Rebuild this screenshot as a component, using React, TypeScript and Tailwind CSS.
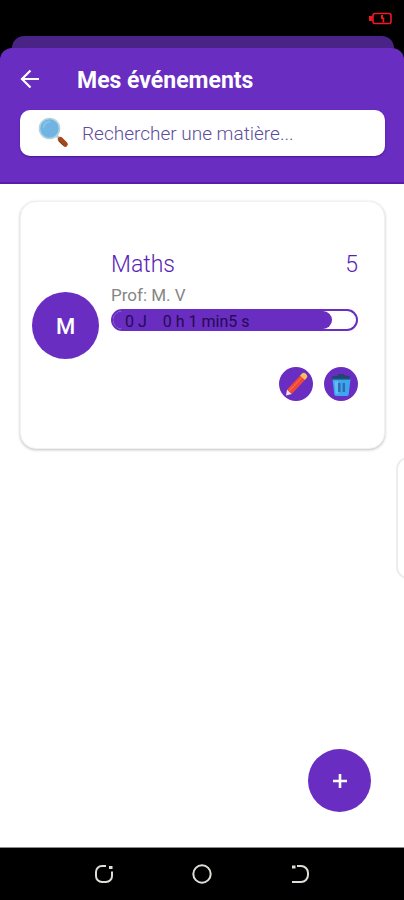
function BatteryIcon() {
  return (
    <svg width="24" height="13" viewBox="0 0 24 13" fill="none" aria-hidden="true">
      <rect x="5" y="1.500" width="18" height="10" rx="2" stroke="#ee1a1f" strokeWidth="1.600" />
      <path d="M1 4h3.500v5H1z" fill="#ee1a1f" />
      <path d="M13 3v4h1.500v3.500h1.800V5.500h-1.300V3z" fill="#ee1a1f" />
    </svg>
  );
}

function BackIcon() {
  return (
    <svg width="20" height="20" viewBox="0 0 20 20" fill="none" stroke="#fff" strokeWidth="2.200" aria-hidden="true">
      <path d="M19 10H3M10.500 1.500L2 10l8.500 8.500" />
    </svg>
  );
}

function MagnifierIcon() {
  return (
    <svg width="32" height="32" viewBox="0 0 32 32" fill="none" aria-hidden="true">
      <path d="M18.500 18.500l4 4" stroke="#b9c9cf" strokeWidth="2.500" />
      <path d="M22.300 22.300l5 5" stroke="#a3481c" strokeWidth="5" strokeLinecap="round" />
      <path d="M20.500 23.700l4.800 4.800" stroke="#6e2d14" strokeWidth="1" />
      <circle cx="11.500" cy="11.500" r="10" fill="#6fb4e3" stroke="#b4d2dc" strokeWidth="1.600" />
      <path d="M5.500 10.500a7 7 0 0 1 6-6" stroke="#8bc6ec" strokeWidth="1.500" strokeLinecap="round" />
    </svg>
  );
}

function PencilIcon() {
  return (
    <svg width="34" height="34" viewBox="0 0 34 34" fill="none" aria-hidden="true">
      <path d="M7 28.500l1-6 4.800 4.400z" fill="#f6dfe0" />
      <path d="M8 22.500L21 8.700l4.800 4.400-13 13.800z" fill="#ef4635" />
      <path d="M10 24L23 10.300" stroke="#f8674f" strokeWidth="1.200" />
      <path d="M21 8.700l1.500-1.700a3.200 3.200 0 0 1 4.700 4.500l-1.400 1.600z" fill="#f5bd57" />
    </svg>
  );
}

function TrashIcon() {
  return (
    <svg width="34" height="34" viewBox="0 0 34 34" fill="none" aria-hidden="true">
      <path d="M8.500 12h18l-1.800 15.500a2 2 0 0 1-2 1.500h-10.400a2 2 0 0 1-2-1.500z" fill="#3ea5ef" />
      <path d="M10.500 14h3.500l.5 13h-3z" fill="#62bbf4" />
      <path d="M15.300 16v9M19.800 16v9" stroke="#2a6db0" strokeWidth="2.400" />
      <path d="M8 9.500l6-1V7h6v1l6 1.500v3H8z" fill="#21466f" />
      <path d="M8.500 12.300h18" stroke="#2872a7" strokeWidth="1.200" />
    </svg>
  );
}

function SystemBar() {
  const button = "flex size-8 items-center justify-center";
  return (
    <nav aria-label="Système" className="flex h-[53px] shrink-0 items-center justify-center gap-[66px] border-t border-[#8c8c8c] bg-black">
      <button type="button" aria-label="Applications récentes" className={button}>
        <svg width="20" height="20" viewBox="0 0 20 20" fill="none" stroke="#deded9" strokeWidth="2">
          <path d="M12 2H8a6 6 0 0 0-6 6v4a6 6 0 0 0 6 6h4a6 6 0 0 0 6-6V7.500" />
          <path d="M15 3.500h3.500" strokeWidth="3" />
        </svg>
      </button>
      <button type="button" aria-label="Accueil" className={button}>
        <svg width="20" height="20" viewBox="0 0 20 20" fill="none" stroke="#deded9" strokeWidth="2">
          <circle cx="10" cy="10" r="8.700" />
        </svg>
      </button>
      <button type="button" aria-label="Retour système" className={button}>
        <svg width="20" height="20" viewBox="0 0 20 20" fill="none" stroke="#deded9" strokeWidth="2">
          <path d="M7 2h4a7 7 0 0 1 7 7v2a7 7 0 0 1-7 7H2" />
          <path d="M2 3h3.500" strokeWidth="3" />
        </svg>
      </button>
    </nav>
  );
}

function EventCard() {
  const progress = 90;
  const action = "flex size-[34px] items-center justify-center overflow-hidden rounded-full bg-[#692dc1]";
  return (
    <article className="mr-[19px] ml-5 mt-[17px] flex h-[248px] items-center gap-3 rounded-2xl border border-[#f1f1f1] bg-white pr-[26px] pl-[11px] shadow-[0_1px_3px_rgba(0,0,0,0.25)]">
      <div className="flex size-[67px] shrink-0 items-center justify-center rounded-full bg-[#692dc1] pt-0.5 text-[22px] font-medium text-white">
        M
      </div>
      <div className="min-w-0 flex-1">
        <div className="flex items-center justify-between text-[23px] leading-8 font-light text-[#5a1fb5]">
          <h2>Maths</h2>
          <span>5</span>
        </div>
        <p className="text-[17px] leading-7 text-[#858585]">Prof: M. V</p>
        <div className="relative h-[22px] overflow-hidden rounded-full border-2 border-[#692dc1] bg-white">
          <div className="h-full rounded-r-full bg-[#692dc1]" style={{ width: `${progress}%` }} />
          <p className="absolute inset-0 flex items-center gap-4 pt-1 pl-3 text-base leading-5 text-[#240b50]">
            <span>0 J</span>
            <span>0 h 1 min5 s</span>
          </p>
        </div>
        <div className="mt-9 flex justify-end gap-[11px]">
          <button type="button" aria-label="Modifier" className={action}>
            <PencilIcon />
          </button>
          <button type="button" aria-label="Supprimer" className={action}>
            <TrashIcon />
          </button>
        </div>
      </div>
    </article>
  );
}

export default function App() {
  return (
    <div className="flex min-h-screen flex-col bg-white font-[Roboto,sans-serif]">
      <div className="bg-black">
        <div className="flex h-9 items-center justify-end pr-3">
          <BatteryIcon />
        </div>
        <div className="mr-[10px] ml-3 h-3 rounded-t-xl bg-[#4a2387]" />
        <header className="rounded-t-xl border-b-2 border-[#591bb0] bg-[#692dc1] pr-[19px] pb-[26px] pl-5">
          <div className="flex h-[62px] items-center gap-[37px]">
            <button type="button" aria-label="Retour">
              <BackIcon />
            </button>
            <h1 className="pt-1 text-[23px] font-bold text-white">Mes événements</h1>
          </div>
          <label className="flex h-[46px] items-center gap-3 rounded-[10px] bg-white pl-[18px] shadow-[0_1px_2px_#4a1499]">
            <MagnifierIcon />
            <input
              type="text"
              aria-label="Rechercher une matière"
              placeholder="Rechercher une matière..."
              className="min-w-0 flex-1 bg-transparent pt-0.5 text-[19px] font-light text-[#4b3a94] outline-none placeholder:text-[#5d4d9c]"
            />
          </label>
        </header>
      </div>
      <main className="relative flex-1 overflow-hidden">
        <EventCard />
        <div className="absolute top-[273px] -right-4 h-[122px] w-6 rounded-2xl border-2 border-[#ededed] bg-white" />
        <button
          type="button"
          aria-label="Ajouter un événement"
          className="absolute right-[33px] bottom-[35px] flex size-[63px] items-center justify-center rounded-full bg-[#692dc1]"
        >
          <svg width="16" height="16" viewBox="0 0 16 16" stroke="#fff" strokeWidth="2.600" aria-hidden="true">
            <path d="M8 1v14M1 8h14" />
          </svg>
        </button>
      </main>
      <SystemBar />
    </div>
  );
}
